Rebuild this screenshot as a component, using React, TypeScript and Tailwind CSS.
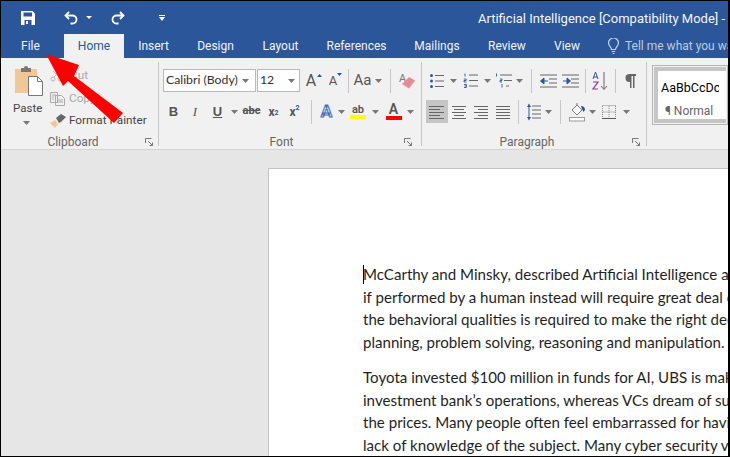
import type { ReactNode } from 'react';

const Caret = () => (
  <svg width="7" height="4" viewBox="0 0 7 4"><path d="M0 0h7L3.5 4z" fill="#777" /></svg>
);

const Sep = () => <div className="w-px h-[24px] bg-[#c6c6c6]" />;

const Slot = ({ className, children }: { className: string; children?: ReactNode }) => (
  <div className={`flex items-center justify-center shrink-0 h-[23px] ${className}`}>{children}</div>
);

const Launcher = () => (
  <svg width="8" height="8" viewBox="0 0 8 8" fill="none" stroke="#777">
    <path d="M.5 5V.5H6.500M7.500 7.500L3 3M7.500 4.500v3h-3" />
  </svg>
);

const Lines = ({ rows }: { rows: [number, number][] }) => (
  <svg width="16" height="14" viewBox="0 0 16 14" stroke="#666" strokeWidth="1">
    {rows.map(([a, b], i) => (
      <path key={i} d={`M${a} ${1.5 + i * 3}H${b}`} />
    ))}
  </svg>
);

const Bullets = () => (
  <svg width="14" height="14" viewBox="0 0 14 14">
    <path d="M5 1.500h9M5 7h9M5 12.500h9" stroke="#666" />
    <circle cx="1.500" cy="1.500" r="1.500" fill="#2b579a" />
    <circle cx="1.500" cy="7" r="1.500" fill="#2b579a" />
    <circle cx="1.500" cy="12.500" r="1.500" fill="#2b579a" />
  </svg>
);

const Numbering = () => (
  <svg width="15" height="15" viewBox="0 0 15 15">
    <path d="M6 2h9M6 7.500h9M6 13h9" stroke="#666" />
    <path d="M2 .5v3M.8 6h2.400v1.500H1V9h2.400M1 11.500h2.400v3H1M1.500 13h1.800" stroke="#2b579a" fill="none" strokeWidth=".9" />
  </svg>
);

const Multilevel = () => (
  <svg width="18" height="15" viewBox="0 0 18 15">
    <path d="M5 2h12M9 7.500h8M11 13h3" stroke="#666" />
    <path d="M1.500.5v3M5 6h2v1.500H5V9h2M7 11v3.500" stroke="#2b579a" fill="none" strokeWidth=".9" />
  </svg>
);

const Indent = ({ flip }: { flip?: boolean }) => (
  <svg width="17" height="14" viewBox="0 0 17 14">
    <path d="M0 1h17M0 13h17M9 5h8M9 9h8" stroke="#666" />
    <path d={flip ? 'M1 7h4V4l3.500 3L5 10V7' : 'M8 7H4V4L.5 7 4 10V7'} fill="#2b579a" stroke="#2b579a" />
  </svg>
);

const Sort = () => (
  <svg width="16" height="20" viewBox="0 0 16 20" fill="none">
    <path d="M1 8l2.500-7L6 8M1.800 6h3.400" stroke="#2b579a" />
    <path d="M1 11h5l-5 7h5" stroke="#8c3d86" strokeWidth="1.200" />
    <path d="M12 1v17M9 15l3 3.500 3-3.500" stroke="#666" />
  </svg>
);

const Pilcrow = () => (
  <svg width="11" height="14" viewBox="0 0 11 14" fill="#666">
    <path d="M4 0h7v2H9.500v12H8V2H6.500v12H5V8a4 4 0 0 1-1-8z" />
  </svg>
);

const LineSpacing = () => (
  <svg width="14" height="18" viewBox="0 0 14 18">
    <path d="M5 3h9M5 7h9M5 11h9M5 15h9" stroke="#666" />
    <path d="M2 3v12" stroke="#2b579a" />
    <path d="M0 4l2-3.500L4 4zM0 14l2 3.500L4 14z" fill="#2b579a" />
  </svg>
);

const Shading = () => (
  <svg width="17" height="20" viewBox="0 0 17 20" fill="none">
    <path d="M3 8l5-5 5 5-5 5z" fill="#fff" stroke="#777" />
    <path d="M8 1v3" stroke="#777" />
    <path d="M12 4c3 0 4 2 4 4l-1.500 2-1.500-3z" fill="#2b579a" />
    <rect x=".5" y="15.500" width="15" height="3.500" fill="#fff" stroke="#999" />
  </svg>
);

const Borders = () => (
  <svg width="14" height="14" viewBox="0 0 14 14" fill="none">
    <path d="M.5 1v12M13.500 1v12M.5.5h13M.5 7h13M7 1v12" stroke="#888" strokeDasharray="1 1" />
    <path d="M0 13.500h14" stroke="#555" />
  </svg>
);

const Eraser = () => (
  <svg width="17" height="18" viewBox="0 0 17 18">
    <text x="0" y="10" fontSize="11" fill="#777" fontFamily="Roboto">A</text>
    <path d="M3 12l7-7 6 3.500-6 8z" fill="#e88a94" />
  </svg>
);

const Save = () => (
  <svg width="14" height="14" viewBox="0 0 14 14">
    <path d="M0 0h11.500L14 2.500V14H0z" fill="#fff" />
    <path d="M2.500 1.500h8.500v4H2.500z" fill="#2b579a" />
    <path d="M3.500 9h7v5h-7z" fill="#2b579a" />
    <path d="M5 10h2v3H5z" fill="#fff" />
  </svg>
);

const Undo = ({ flip }: { flip?: boolean }) => (
  <svg width="14" height="14" viewBox="0 0 14 14" fill="none" stroke="#fff" strokeWidth="1.800" className={flip ? '-scale-x-100' : ''}>
    <path d="M5 1L1.500 4.500 5 8M2 4.500h6.500a3.800 3.800 0 0 1 0 8H6.500" />
  </svg>
);

const Bulb = () => (
  <svg width="13" height="17" viewBox="0 0 13 17" fill="none" stroke="#c7d3e6" strokeWidth="1.200">
    <path d="M4.500 11.500c0-2.500-3-3.500-3-6.500a5 5 0 0 1 10 0c0 3-3 4-3 6.500zM4.800 13.500h3.400M5.500 15.500h2" />
  </svg>
);

const tabs: [string, string][] = [
  ['Insert', 'w-[59px]'],
  ['Design', 'w-[65px]'],
  ['Layout', 'w-[65px]'],
  ['References', 'w-[87px]'],
  ['Mailings', 'w-[74px]'],
  ['Review', 'w-[66px]'],
  ['View', 'w-[54px]'],
];

const para1 = [
  'McCarthy and Minsky, described Artificial Intelligence as',
  'if performed by a human instead will require great deal of',
  'the behavioral qualities is required to make the right decisions',
  'planning, problem solving, reasoning and manipulation.',
];

const para2 = [
  'Toyota invested $100 million in funds for AI, UBS is making',
  'investment bank’s operations, whereas VCs dream of substantial',
  'the prices. Many people often feel embarrassed for having',
  'lack of knowledge of the subject. Many cyber security vendors',
];

const Group = ({ className, label, labelClass, children }: { className: string; label: string; labelClass: string; children: ReactNode }) => (
  <div className={`shrink-0 h-[84px] flex flex-col border-r border-[#c6c6c6] ${className}`}>
    <div className="h-[76px] shrink-0">{children}</div>
    <div className={`h-[8px] shrink-0 flex items-center text-[12px] leading-[12px] text-[#666] ${labelClass}`}>
      <span className="flex-1 text-center">{label}</span>
      <span className="flex mr-[3px]"><Launcher /></span>
    </div>
  </div>
);

export default function App() {
  return (
    <div className="relative w-[730px] h-[457px] overflow-hidden border-t border-l border-b border-r-2 border-black bg-[#e6e6e6] font-['Roboto','Open_Sans',sans-serif]">
      <div className="h-[33px] bg-[#2b579a] flex items-center text-white">
        <Slot className="w-[20px]" />
        <Slot className="w-[14px]"><Save /></Slot>
        <Slot className="w-[29px]" />
        <Slot className="w-[14px]"><Undo /></Slot>
        <Slot className="w-[22px]"><svg width="6" height="3" viewBox="0 0 6 3"><path d="M0 0h6L3 3z" fill="#fff" /></svg></Slot>
        <Slot className="w-[11px]" />
        <Slot className="w-[14px]"><Undo flip /></Slot>
        <Slot className="w-[32px]" />
        <Slot className="w-[10px]">
          <svg width="6" height="6" viewBox="0 0 6 6"><path d="M0 0h6v1H0zM0 2h6L3 6z" fill="#fff" /></svg>
        </Slot>
        <div className="ml-[311px] pt-[2px] text-[13px] whitespace-nowrap text-[#f4f6fa]">Artificial Intelligence [Compatibility Mode] - Word</div>
      </div>

      <div className="h-[24px] bg-[#2b579a] flex items-center text-[12px] text-[#f0f3f8] whitespace-nowrap">
        <div className="w-[63px] shrink-0 pl-[20px]">File</div>
        <div className="w-[60px] shrink-0 h-[24px] bg-[#f1f1f1] text-[#2b579a] flex items-center justify-center">Home</div>
        {tabs.map(([name, w]) => (
          <div key={name} className={`${w} text-center shrink-0`}>{name}</div>
        ))}
        <div className="flex items-center gap-[5px] ml-[13px] text-[#bccbe0]">
          <Bulb />
          <span>Tell me what you want to do</span>
        </div>
      </div>

      <div className="h-[92px] bg-[#f1f1f1] border-b border-[#d4d4d4] pt-[4px] flex text-[#444]">
        <Group className="w-[158px]" label="Clipboard" labelClass="pr-[2px]">
          <div className="flex h-[76px]">
            <div className="w-[49px] pl-[12px] pt-[3px] flex flex-col">
              <svg className="ml-px" width="29" height="31" viewBox="0 0 29 31">
                <path d="M1 4h22v24H1z" fill="#f0c896" />
                <path d="M7 3h3a2 2 0 0 1 4 0h3v4H7z" fill="#777" />
                <path d="M14.500 11.500h9l5 5v14h-14z" fill="#fff" stroke="#777" />
                <path d="M23.500 11.500v5h5" fill="none" stroke="#777" />
              </svg>
              <div className="text-[11.5px] leading-[16px] mt-[4px]">Paste</div>
              <div className="flex pl-[10px] mt-[5px]"><Caret /></div>
            </div>
            <div className="flex flex-col text-[11.75px] whitespace-nowrap">
              <div className="h-[22px] mt-[3px] flex items-center gap-[3px] text-[#a9a9a9]">
                <svg width="14" height="12" viewBox="0 0 14 12" fill="none" stroke="#b5b5b5"><circle cx="3" cy="9" r="2" /><circle cx="10" cy="9" r="2" /><path d="M4 7l6-6M9 7L3 1" /></svg>
                <span className="ml-[3px]">Cut</span>
              </div>
              <div className="h-[23px] flex items-center gap-[4px] text-[#a9a9a9]">
                <svg width="15" height="14" viewBox="0 0 15 14" fill="#f1f1f1" stroke="#a9a9a9"><path d="M.5.5h7v10h-7zM5.500 3.500h6l3 3v7h-9zM2 3h4M2 5h2M2 7h2M7 8h6M7 10h6" /></svg>
                <span>Copy</span>
              </div>
              <div className="h-[22px] flex items-center gap-[3px]">
                <svg width="16" height="14" viewBox="0 0 16 14"><path d="M0 9l5-3 3 4-3 4-2-2z" fill="#f0c896" /><path d="M6 4l5-4 5 3-5 5-2 1z" fill="#666" /></svg>
                <span>Format Painter</span>
              </div>
            </div>
          </div>
        </Group>

        <Group className="w-[263px]" label="Font" labelClass="pr-[6px]">
          <div className="flex pl-[4px] pt-[7px] items-center">
            <div className="w-[93px] h-[23px] bg-white border border-[#b9b9b9] flex items-center justify-between pl-[2px] pr-[6px] text-[12.25px] text-[#333] whitespace-nowrap font-['Lato',sans-serif]">
              Calibri (Body)<Caret />
            </div>
            <div className="w-[43px] h-[23px] ml-px bg-white border border-[#b9b9b9] flex items-center justify-between pl-[2px] pr-[4px] text-[12.25px] text-[#333] font-['Lato',sans-serif]">
              12<Caret />
            </div>
            <Slot className="w-[22px]">
              <span className="text-[16px] relative text-[#555]">A<svg className="absolute right-[-6px] top-[5px]" width="5" height="3" viewBox="0 0 5 3"><path d="M0 3h5L2.500 0z" fill="#2b579a" /></svg></span>
            </Slot>
            <Slot className="w-[22px]">
              <span className="text-[13px] relative text-[#555]">A<svg className="absolute right-[-5px] top-[2px]" width="5" height="3" viewBox="0 0 5 3"><path d="M0 0h5L2.500 3z" fill="#2b579a" /></svg></span>
            </Slot>
            <Slot className="w-[8px]"><Sep /></Slot>
            <Slot className="w-[21px] text-[15px] text-[#555]">Aa</Slot>
            <Slot className="w-[11px]"><Caret /></Slot>
            <Slot className="w-[12px]"><Sep /></Slot>
            <Slot className="w-[22px]"><Eraser /></Slot>
          </div>
          <div className="flex pl-[4px] mt-[8px] items-center text-[#555]">
            <Slot className="w-[21px] text-[13px] font-bold font-['Liberation_Sans',sans-serif]">B</Slot>
            <Slot className="w-[22px] text-[13px] italic font-['Liberation_Serif',serif]">I</Slot>
            <Slot className="w-[23px] text-[13px] font-bold underline font-['Liberation_Sans',sans-serif]">U</Slot>
            <Slot className="w-[11px]"><Caret /></Slot>
            <Slot className="w-[23px] text-[11px] font-bold line-through">abc</Slot>
            <Slot className="w-[21px] text-[12px] font-bold">x<sub className="text-[7px] text-[#2b579a]">2</sub></Slot>
            <Slot className="w-[21px] text-[12px] font-bold">x<sup className="text-[7px] text-[#2b579a]">2</sup></Slot>
            <Slot className="w-[12px]"><Sep /></Slot>
            <Slot className="w-[19px] text-[17px] font-bold text-[#dfe7f3] [-webkit-text-stroke:1px_#3f6fb5]">A</Slot>
            <Slot className="w-[11px]"><Caret /></Slot>
            <Slot className="w-[22px]">
              <div className="flex flex-col items-center">
                <span className="text-[11px] leading-[11px] font-semibold">ab</span>
                <div className="w-[16px] h-[4px] bg-[#ffff00]" />
              </div>
            </Slot>
            <Slot className="w-[13px]"><Caret /></Slot>
            <Slot className="w-[23px]">
              <div className="flex flex-col items-center">
                <span className="text-[14px] leading-[13px] font-semibold">A</span>
                <div className="w-[16px] h-[4px] bg-[#ff0000]" />
              </div>
            </Slot>
            <Slot className="w-[11px]"><Caret /></Slot>
          </div>
        </Group>

        <Group className="w-[225px]" label="Paragraph" labelClass="pr-[3px]">
          <div className="flex pl-[4px] pt-[7px] items-center">
            <Slot className="w-[21px]"><Bullets /></Slot>
            <Slot className="w-[12px]"><Caret /></Slot>
            <Slot className="w-[23px]"><Numbering /></Slot>
            <Slot className="w-[11px]"><Caret /></Slot>
            <Slot className="w-[21px]"><Multilevel /></Slot>
            <Slot className="w-[11px]"><Caret /></Slot>
            <Slot className="w-[12px]"><Sep /></Slot>
            <Slot className="w-[22px]"><Indent /></Slot>
            <Slot className="w-[22px]"><Indent flip /></Slot>
            <Slot className="w-[8px]"><Sep /></Slot>
            <Slot className="w-[22px]"><Sort /></Slot>
            <Slot className="w-[8px]"><Sep /></Slot>
            <Slot className="w-[23px]"><Pilcrow /></Slot>
          </div>
          <div className="flex pl-[4px] mt-[8px] items-center">
            <Slot className="w-[22px] bg-[#c6c6c6]"><Lines rows={[[0, 15], [0, 11], [0, 15], [0, 11], [0, 15]]} /></Slot>
            <Slot className="w-[22px]"><Lines rows={[[1, 15], [3, 13], [1, 15], [3, 13], [1, 15]]} /></Slot>
            <Slot className="w-[22px]"><Lines rows={[[1, 15], [5, 15], [1, 15], [5, 15], [1, 15]]} /></Slot>
            <Slot className="w-[22px]"><Lines rows={[[1, 15], [1, 15], [1, 15], [1, 15], [1, 15]]} /></Slot>
            <Slot className="w-[8px]"><Sep /></Slot>
            <Slot className="w-[23px]"><LineSpacing /></Slot>
            <Slot className="w-[7px]"><Caret /></Slot>
            <Slot className="w-[17px]"><Sep /></Slot>
            <Slot className="w-[17px]"><Shading /></Slot>
            <Slot className="w-[12px]"><Caret /></Slot>
            <Slot className="w-[22px]"><Borders /></Slot>
            <Slot className="w-[12px]"><Caret /></Slot>
          </div>
        </Group>

        <div className="ml-[5px] mt-[3px] h-[60px] flex-1 border border-[#b5b5b5] p-px">
          <div className="h-full border-[4px] border-r-0 border-[#c6c6c6] bg-white overflow-hidden flex flex-col items-start pl-[3px]">
            <div className="text-[12.5px] leading-[16px] mt-[9px] w-[58px] overflow-hidden whitespace-nowrap text-black">AaBbCcDc</div>
            <div className="text-[12px] leading-[14px] mt-[8px] text-[#666] pl-[4px] whitespace-nowrap">¶ Normal</div>
          </div>
        </div>
      </div>

      <div className="pt-[18px] pl-[267px] h-[306px] overflow-hidden">
        <div className="h-[400px] bg-white border-t border-l border-[#c6c6c6] pl-[94px] pt-[94px] whitespace-nowrap text-[15.1px] leading-[22.700px] text-[#1f1f1f] font-['Lato',sans-serif] overflow-hidden">
          <div className="relative">
            <div className="absolute left-0 top-[2px] w-px h-[19px] bg-black" />
            {para1.map((l) => <div key={l}>{l}</div>)}
          </div>
          <div className="mt-[12px]">
            {para2.map((l) => <div key={l}>{l}</div>)}
          </div>
        </div>
      </div>

      <svg className="absolute left-[-1px] top-[-1px] pointer-events-none" width="140" height="130" viewBox="0 0 140 130">
        <path d="M46 54L79 65 74 76 123 113 114 123 68 81 63 86z" fill="#ff0000" />
      </svg>
    </div>
  );
}
